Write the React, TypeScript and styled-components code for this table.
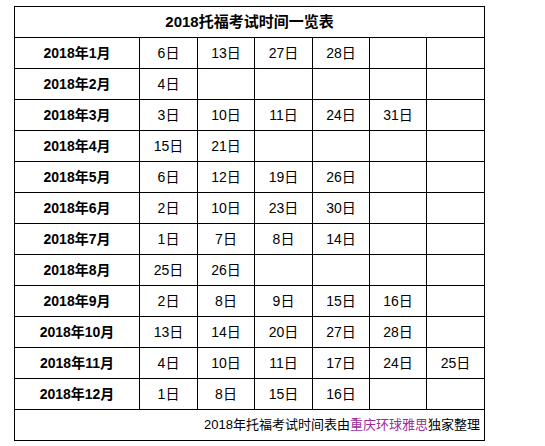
import React from "react";
import styled, { createGlobalStyle } from "styled-components";

const Global = createGlobalStyle`
  html, body { margin: 0; padding: 0; background: #fff; }
  body { font-family: "Liberation Sans", "Noto Sans CJK SC", sans-serif; color: #000; }
`;

const Page = styled.div`
  padding: 6px 0 0 14px;
`;

const Table = styled.table`
  border-collapse: collapse;
  table-layout: fixed;
  width: 470px;
`;

const Column = styled.col<{ $w: number }>`
  width: ${(p) => p.$w}px;
`;

const Cell = styled.td`
  border: 1px solid #000;
  height: 30px;
  padding: 0;
  text-align: center;
  vertical-align: middle;
  font-size: 14px;
  line-height: 16px;
`;

const Title = styled(Cell)`
  font-size: 15px;
  font-weight: bold;
`;

const Label = styled(Cell)`
  font-weight: bold;
`;

const Footer = styled(Cell)`
  font-size: 13px;
  text-align: right;
  padding-right: 4px;
`;

const Brand = styled.span`
  color: #9b2d9b;
`;

const widths = [125, 58, 57, 58, 57, 57, 58];

const rows: [string, string[]][] = [
  ["2018年1月", ["6日", "13日", "27日", "28日"]],
  ["2018年2月", ["4日"]],
  ["2018年3月", ["3日", "10日", "11日", "24日", "31日"]],
  ["2018年4月", ["15日", "21日"]],
  ["2018年5月", ["6日", "12日", "19日", "26日"]],
  ["2018年6月", ["2日", "10日", "23日", "30日"]],
  ["2018年7月", ["1日", "7日", "8日", "14日"]],
  ["2018年8月", ["25日", "26日"]],
  ["2018年9月", ["2日", "8日", "9日", "15日", "16日"]],
  ["2018年10月", ["13日", "14日", "20日", "27日", "28日"]],
  ["2018年11月", ["4日", "10日", "11日", "17日", "24日", "25日"]],
  ["2018年12月", ["1日", "8日", "15日", "16日"]],
];

export default function App() {
  return (
    <Page>
      <Global />
      <Table>
        <colgroup>
          {widths.map((w, i) => (
            <Column key={i} $w={w} />
          ))}
        </colgroup>
        <tbody>
          <tr>
            <Title colSpan={7}>2018托福考试时间一览表</Title>
          </tr>
          {rows.map(([label, days]) => (
            <tr key={label}>
              <Label>{label}</Label>
              {Array.from({ length: 6 }).map((_, i) => (
                <Cell key={i}>{days[i] ?? ""}</Cell>
              ))}
            </tr>
          ))}
          <tr>
            <Footer colSpan={7}>
              2018年托福考试时间表由<Brand>重庆环球雅思</Brand>独家整理
            </Footer>
          </tr>
        </tbody>
      </Table>
    </Page>
  );
}
